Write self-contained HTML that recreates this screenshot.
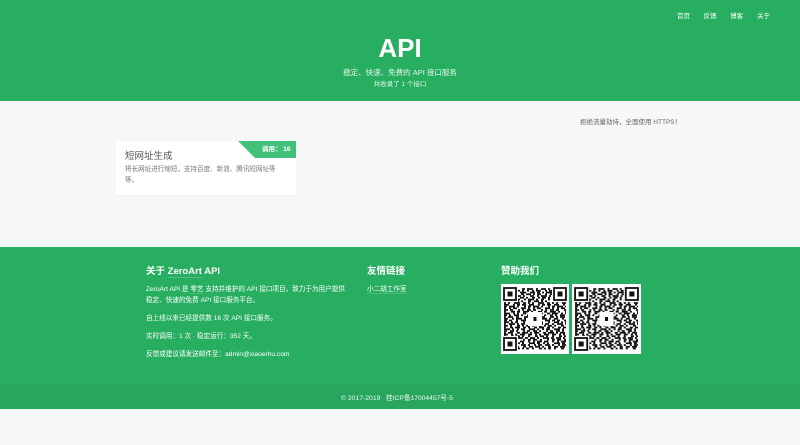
<!DOCTYPE html>
<html lang="zh-CN">
<head>
<meta charset="utf-8">
<title>ZeroArt API</title>
<style>
html,body{margin:0;padding:0;width:800px;height:445px;overflow:hidden;background:#f7f7f7}
body{position:relative;font-family:"Liberation Sans","Noto Sans CJK SC",sans-serif;color:#fff}
.a{position:absolute;white-space:nowrap;line-height:1}
.bar{position:absolute;left:0;width:800px}
u{text-decoration:none;border-bottom:1px solid rgba(255,255,255,.18)}
</style>
</head>
<body>
<div class="bar" style="top:0;height:101px;background:#27ae60"></div>
<div class="bar" style="top:247px;height:138px;background:#27ae60"></div>
<div class="bar" style="top:385px;height:24px;background:#28a65d"></div>

<div class="a" style="left:677px;top:14px;font-size:6.5px">首页</div>
<div class="a" style="left:703.5px;top:14px;font-size:6.5px">反馈</div>
<div class="a" style="left:730px;top:14px;font-size:6.5px">博客</div>
<div class="a" style="left:757px;top:14px;font-size:6.5px">关于</div>

<div class="a" style="left:300px;width:200px;text-align:center;top:35px;font-size:26px;font-weight:bold">API</div>
<div class="a" style="left:300px;width:200px;text-align:center;top:68.5px;font-size:7.5px;color:#e6f5ec">稳定、快速、免费的 API 接口服务</div>
<div class="a" style="left:300px;width:200px;text-align:center;top:82px;font-size:6.5px;color:#e6f5ec">共收录了 1 个接口</div>

<div class="a" style="left:580px;top:120px;font-size:6.5px;color:#666">拒绝流量劫持&#xFF0C;全面使用 HTTPS&#xFF01;</div>

<div class="a" style="left:116px;top:141px;width:180px;height:54px;background:#fff;box-shadow:0 1px 2px rgba(0,0,0,.03)"></div>
<svg class="a" style="left:238px;top:141px" width="58" height="17"><polygon points="0,0 58,0 58,17 17,17" fill="#43c17b"/></svg>
<div class="a" style="left:262px;top:147px;font-size:6.5px;font-weight:bold">调用&#xFF1A; 16</div>
<div class="a" style="left:125px;top:152px;font-size:9.5px;color:#555">短网址生成</div>
<div class="a" style="left:125px;top:167px;font-size:6.55px;color:#777">将长网址进行缩短&#xFF0C;支持百度、新浪、腾讯短网址等</div>
<div class="a" style="left:125px;top:178px;font-size:6.55px;color:#777">等。</div>

<div class="a" style="left:146px;top:267px;font-size:9.5px;font-weight:bold">关于 <u>ZeroArt</u> API</div>
<div class="a" style="left:146px;top:287px;font-size:6.6px">ZeroArt API 是 <u>零艺</u> 支持并维护的 API 接口项目&#xFF0C;致力于为用户提供</div>
<div class="a" style="left:146px;top:298px;font-size:6.6px">稳定、快速的免费 API 接口服务平台。</div>
<div class="a" style="left:146px;top:316px;font-size:6.6px">自上线以来已经提供数 16 次 API 接口服务。</div>
<div class="a" style="left:146px;top:334px;font-size:6.6px">实时调用&#xFF1A;1 次 · 稳定运行&#xFF1A;352 天。</div>
<div class="a" style="left:146px;top:352px;font-size:6.6px">反馈或建议请发送邮件至&#xFF1A;admin@xiaoerhu.com</div>

<div class="a" style="left:367px;top:267px;font-size:9.5px;font-weight:bold">友情链接</div>
<div class="a" style="left:367px;top:287px;font-size:6.6px"><u>小二胡工作室</u></div>

<div class="a" style="left:501px;top:267px;font-size:9.5px;font-weight:bold">赞助我们</div>

<svg width="0" height="0" style="position:absolute">
<symbol id="qr" viewBox="0 0 68 70">
<rect width="68" height="70" fill="#fff"/>
<g stroke="#111" stroke-width="1.75" fill="none">
<path d="M3 5h62" stroke-dasharray="2 3 5 2 2 4 3 2 6 3"/>
<path d="M3 6.75h62" stroke-dasharray="3 2 2 5 4 2 2 3 2"/>
<path d="M3 8.5h62" stroke-dasharray="5 2 3 2 2 2 6 4"/>
<path d="M3 10.25h62" stroke-dasharray="2 2 4 4 2 3 3 2 5 2"/>
<path d="M3 12h62" stroke-dasharray="4 3 2 2 6 2 2 5"/>
<path d="M3 13.75h62" stroke-dasharray="2 4 3 3 2 2 4 2"/>
<path d="M3 15.5h62" stroke-dasharray="6 2 2 3 3 4 2 2"/>
<path d="M3 17.25h62" stroke-dasharray="3 3 5 2 2 2 2 5"/>
<path d="M3 19h62" stroke-dasharray="2 2 2 4 6 3 3 2"/>
<path d="M3 20.75h62" stroke-dasharray="5 4 2 2 3 2 4 3"/>
<path d="M3 22.5h62" stroke-dasharray="3 2 6 2 2 5 2 2"/>
<path d="M3 24.25h62" stroke-dasharray="2 3 2 2 4 4 5 2"/>
<path d="M3 26h62" stroke-dasharray="4 2 3 5 2 2 2 3"/>
<path d="M3 27.75h62" stroke-dasharray="2 5 4 2 3 3 6 2"/>
<path d="M3 29.5h62" stroke-dasharray="6 3 2 2 2 4 3 2"/>
<path d="M3 31.25h62" stroke-dasharray="3 2 2 3 5 2 2 4"/>
<path d="M3 33h62" stroke-dasharray="2 2 5 3 3 5 4 2"/>
<path d="M3 34.75h62" stroke-dasharray="4 4 2 2 6 2 2 3"/>
<path d="M3 36.5h62" stroke-dasharray="3 2 3 4 2 3 5 2"/>
<path d="M3 38.25h62" stroke-dasharray="5 2 2 2 3 5 2 4"/>
<path d="M3 40h62" stroke-dasharray="2 3 6 2 2 2 4 3"/>
<path d="M3 41.75h62" stroke-dasharray="4 2 2 5 3 2 2 2"/>
<path d="M3 43.5h62" stroke-dasharray="2 4 3 2 5 3 3 2"/>
<path d="M3 45.25h62" stroke-dasharray="6 2 2 3 2 2 4 4"/>
<path d="M3 47h62" stroke-dasharray="3 3 4 2 2 5 2 2"/>
<path d="M3 48.75h62" stroke-dasharray="2 2 5 4 3 2 6 2"/>
<path d="M3 50.5h62" stroke-dasharray="4 3 2 2 2 3 5 3"/>
<path d="M3 52.25h62" stroke-dasharray="2 5 3 2 4 2 2 4"/>
<path d="M3 54h62" stroke-dasharray="5 2 2 4 6 2 3 2"/>
<path d="M3 55.75h62" stroke-dasharray="3 2 4 3 2 5 2 3"/>
<path d="M3 57.5h62" stroke-dasharray="2 3 2 2 5 2 4 4"/>
<path d="M3 59.25h62" stroke-dasharray="6 2 3 3 2 2 2 5"/>
<path d="M3 61h62" stroke-dasharray="2 4 2 2 4 3 5 2"/>
<path d="M3 62.75h62" stroke-dasharray="4 2 5 2 2 4 3 3"/>
<path d="M3 64.5h62" stroke-dasharray="3 3 2 5 3 2 2 2"/>
</g>
<g fill="#fff"><rect x="2" y="3" width="15" height="15"/><rect x="51" y="3" width="15" height="15"/><rect x="2" y="52" width="15" height="15"/><rect x="27" y="28" width="14" height="14"/></g>
<g fill="none" stroke="#111" stroke-width="1.8"><rect x="3" y="4" width="12" height="12"/><rect x="53" y="4" width="12" height="12"/><rect x="3" y="54" width="12" height="12"/></g>
<g fill="#111"><rect x="6.5" y="7.5" width="5" height="5"/><rect x="56.5" y="7.5" width="5" height="5"/><rect x="6.5" y="57.5" width="5" height="5"/><rect x="32.5" y="33" width="3" height="4"/></g>
</symbol>
</svg>
<svg class="a" style="left:501px;top:284px" width="68" height="70"><use href="#qr"/></svg>
<svg class="a" style="left:572px;top:284px" width="69" height="70" viewBox="0 0 68 70" preserveAspectRatio="none"><use href="#qr"/></svg>

<div class="a" style="left:341px;top:396px;font-size:6.8px;color:#eef8f2">© 2017-2019</div>
<div class="a" style="left:386px;top:396px;font-size:6.7px;color:#eef8f2">桂ICP备17004457号-5</div>
</body>
</html>
